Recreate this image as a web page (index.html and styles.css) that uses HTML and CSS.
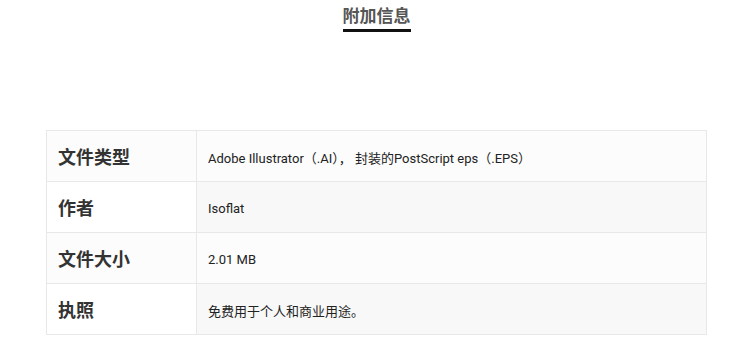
FILE: index.html
```html
<!DOCTYPE html>
<html lang="zh">
<head>
<meta charset="utf-8">
<link rel="stylesheet" href="styles.css">
</head>
<body>
<div class="wrap">
  <div class="tabs">
    <span class="tab">附加信息</span>
  </div>
  <table class="info">
    <tr><th>文件类型</th><td>Adobe Illustrator（.AI）， 封装的PostScript eps（.EPS）</td></tr>
    <tr><th>作者</th><td>Isoflat</td></tr>
    <tr><th>文件大小</th><td>2.01 MB</td></tr>
    <tr><th>执照</th><td>免费用于个人和商业用途。</td></tr>
  </table>
</div>
</body>
</html>
```
FILE: styles.css
```css
html, body {
  margin: 0;
  padding: 0;
  background: #fff;
}
body {
  font-family: Roboto, "Noto Sans CJK SC", sans-serif;
  color: #222;
}
.wrap {
  width: 661px;
  margin-left: 46px;
}
.tabs {
  display: flex;
  justify-content: center;
  padding-top: 5px;
}
.tab {
  font-size: 17px;
  font-weight: 700;
  color: #555;
  line-height: 22px;
  padding-bottom: 2px;
  border-bottom: 3px solid #111;
}
.info {
  margin-top: 98px;
  width: 100%;
  border-collapse: collapse;
  border: 1px solid #e8e8e8;
}
.info tr {
  height: 51px;
}
.info th, .info td {
  border: 1px solid #e8e8e8;
  padding: 0 11px;
  text-align: left;
  vertical-align: middle;
}
.info th {
  width: 127px;
  font-size: 18px;
  font-weight: 700;
  color: #333;
}
.info td {
  font-size: 13px;
  color: #222;
  padding-top: 2px;
}
.info tr:nth-child(odd) th,
.info tr:nth-child(odd) td {
  background: #fcfcfc;
}
.info tr:nth-child(even) th {
  background: #fff;
}
.info tr:nth-child(even) td {
  background: #f8f8f8;
}
```
